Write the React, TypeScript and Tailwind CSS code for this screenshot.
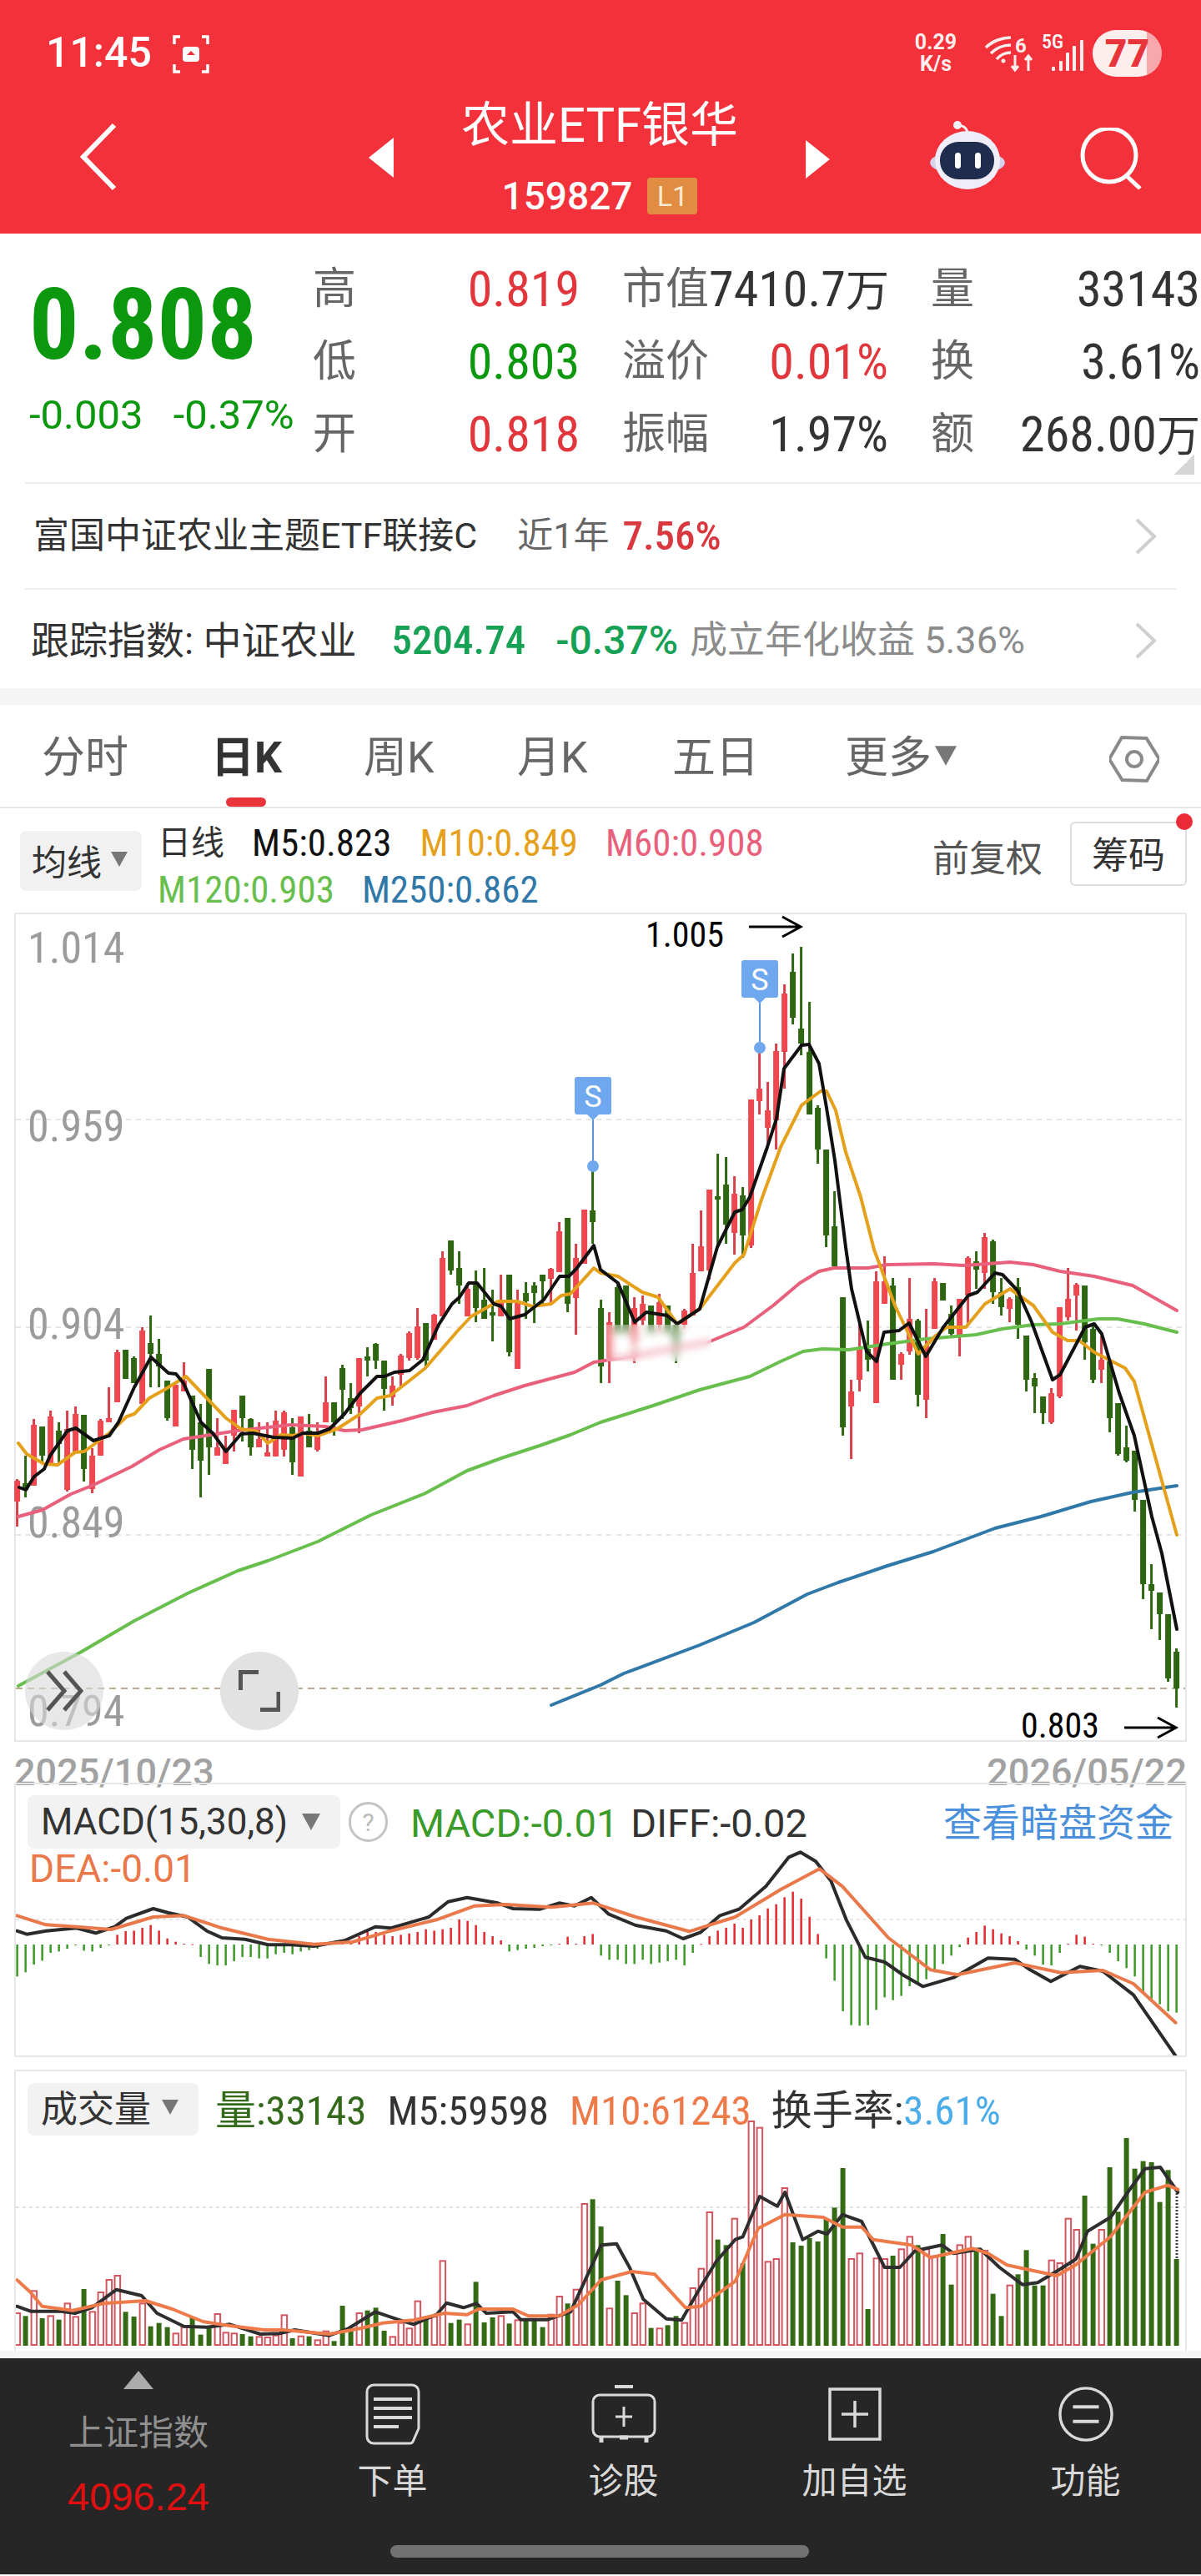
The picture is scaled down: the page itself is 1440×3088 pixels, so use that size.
import React from 'react';

type Pt = [number, number];

// candle: high, low, bodyTop, bodyBottom, red(1)/green(0) -- page y coords
const candles: number[][] = [
  [1775,1832,1777,1802,1],[1747,1797,1780,1788,0],[1703,1783,1710,1783,1],[1712,1757,1712,1747,0],[1693,1757,1700,1757,1],
  [1707,1757,1717,1733,0],[1693,1790,1715,1788,1],[1688,1743,1697,1743,1],[1698,1778,1698,1763,0],[1738,1792,1747,1787,1],
  [1703,1747,1705,1747,1],[1665,1707,1702,1707,1],[1620,1683,1623,1683,1],[1620,1655,1620,1655,0],[1628,1660,1630,1660,0],
  [1593,1685,1597,1685,1],[1579,1665,1612,1625,0],[1607,1665,1625,1640,0],[1657,1705,1657,1702,0],[1662,1712,1662,1712,1],
  [1635,1670,1657,1670,1],[1675,1763,1675,1740,0],[1685,1797,1707,1753,0],[1643,1770,1643,1737,0],[1702,1747,1737,1747,1],
  [1723,1757,1740,1757,1],[1692,1742,1692,1723,1],[1675,1730,1675,1702,0],[1702,1747,1703,1737,0],[1707,1737,1727,1737,1],
  [1707,1748,1743,1748,1],[1693,1748,1705,1748,1],[1693,1748,1695,1740,1],[1702,1770,1713,1755,0],[1700,1772,1700,1772,1],
  [1697,1737,1717,1737,0],[1707,1742,1723,1740,1],[1652,1707,1683,1707,1],[1683,1723,1683,1707,0],[1638,1703,1642,1668,0],
  [1660,1697,1678,1690,0],[1630,1720,1630,1688,1],[1617,1652,1628,1633,0],[1612,1643,1613,1633,0],[1633,1693,1633,1667,0],
  [1652,1687,1663,1677,1],[1625,1665,1627,1650,1],[1598,1633,1600,1630,1],[1570,1632,1592,1630,1],[1588,1640,1588,1633,0],
  [1577,1608,1578,1608,1],[1502,1580,1510,1580,1],[1489,1530,1489,1525,0],[1502,1565,1522,1543,0],[1540,1580,1547,1580,1],
  [1525,1587,1540,1570,0],[1522,1583,1560,1583,0],[1548,1610,1575,1579,0],[1530,1580,1562,1580,1],[1530,1628,1530,1623,0],
  [1548,1643,1563,1643,1],[1539,1583,1552,1562,0],[1539,1588,1543,1552,0],[1530,1568,1530,1538,0],[1522,1565,1523,1535,1],
  [1467,1527,1478,1527,1],[1462,1575,1462,1565,0],[1493,1602,1510,1558,1],[1452,1517,1452,1517,1],[1400,1493,1453,1467,0],
  [1560,1660,1570,1640,0],[1575,1660,1587,1630,1],[1540,1600,1545,1600,0],[1543,1600,1543,1600,0],[1557,1636,1570,1610,1],
  [1555,1591,1565,1585,1],[1567,1600,1567,1600,0],[1553,1600,1563,1590,1],[1567,1600,1567,1600,0],[1587,1636,1590,1610,0],
  [1571,1595,1573,1590,1],[1493,1579,1528,1579,1],[1453,1526,1496,1526,1],[1428,1536,1428,1525,1],[1385,1497,1436,1440,0],
  [1389,1493,1422,1470,0],[1412,1506,1433,1480,1],[1425,1510,1435,1483,0],[1320,1498,1320,1495,1],[1258,1338,1307,1322,1],
  [1299,1375,1333,1354,1],[1253,1380,1262,1345,1],[1182,1307,1193,1263,1],[1145,1230,1167,1222,0],[1137,1267,1235,1253,0],
  [1203,1338,1263,1338,0],[1327,1397,1330,1380,0],[1380,1497,1380,1483,0],[1430,1520,1472,1520,0],[1557,1723,1557,1713,0],
  [1656,1751,1670,1688,1],[1589,1670,1619,1656,1],[1585,1646,1619,1632,0],[1526,1684,1538,1684,1],[1508,1565,1538,1565,1],
  [1534,1656,1543,1656,0],[1623,1656,1625,1638,1],[1534,1626,1583,1622,1],[1583,1688,1585,1674,0],[1571,1702,1615,1680,1],
  [1534,1595,1538,1595,1],[1540,1561,1540,1561,0],[1567,1603,1577,1601,0],[1559,1628,1559,1605,1],[1508,1591,1510,1555,1],
  [1502,1547,1514,1524,0],[1480,1547,1485,1528,1],[1488,1565,1490,1551,0],[1534,1579,1551,1569,0],[1557,1587,1559,1571,1],
  [1534,1607,1545,1590,0],[1603,1670,1603,1656,0],[1648,1696,1654,1664,0],[1676,1709,1676,1696,0],[1666,1709,1672,1707,1],
  [1569,1678,1569,1676,1],[1522,1585,1559,1581,1],[1540,1597,1542,1555,1],[1543,1632,1543,1611,0],[1589,1660,1595,1656,0],
  [1603,1660,1632,1644,1],[1634,1719,1634,1702,0],[1684,1747,1684,1745,0],[1711,1755,1737,1753,0],[1741,1814,1741,1800,0],
  [1800,1919,1800,1901,0],[1877,1955,1901,1909,0],[1911,1968,1911,1937,0],[1937,2018,1937,2014,0],[1978,2049,1982,2026,0],
];

const ma5: Pt[] = [[23,1785],[31,1788],[41,1772],[53,1763],[60,1747],[81,1717],[91,1714],[112,1729],[131,1723],[142,1707],[161,1665],[181,1629],[202,1648],[211,1649],[220,1660],[241,1707],[255,1720],[271,1742],[289,1721],[303,1720],[328,1725],[351,1726],[363,1720],[381,1720],[395,1715],[413,1697],[432,1672],[452,1652],[461,1652],[473,1647],[491,1645],[507,1632],[526,1590],[542,1565],[551,1557],[562,1540],[572,1540],[592,1565],[601,1568],[611,1583],[629,1578],[652,1560],[671,1532],[682,1532],[691,1523],[712,1495],[720,1524],[741,1540],[761,1587],[775,1575],[800,1579],[812,1589],[839,1571],[860,1497],[881,1455],[890,1452],[899,1437],[920,1377],[931,1343],[940,1283],[961,1255],[970,1254],[982,1277],[991,1330],[1001,1393],[1014,1497],[1021,1547],[1039,1622],[1051,1634],[1060,1599],[1078,1597],[1090,1588],[1110,1628],[1131,1593],[1161,1555],[1172,1551],[1193,1528],[1202,1530],[1220,1549],[1237,1587],[1262,1656],[1271,1650],[1301,1593],[1312,1589],[1321,1601],[1342,1672],[1360,1723],[1381,1820],[1393,1864],[1411,1955]];
const ma10: Pt[] = [[22,1732],[32,1745],[53,1757],[69,1758],[90,1743],[101,1742],[131,1720],[152,1700],[161,1697],[179,1678],[197,1668],[223,1652],[243,1673],[271,1702],[289,1715],[308,1718],[321,1732],[337,1722],[351,1723],[363,1720],[381,1723],[404,1715],[432,1697],[452,1678],[468,1675],[491,1657],[510,1642],[549,1597],[565,1580],[597,1562],[620,1562],[638,1568],[661,1565],[673,1555],[684,1553],[712,1522],[720,1528],[741,1532],[770,1551],[789,1557],[812,1589],[839,1571],[881,1516],[892,1506],[913,1440],[936,1377],[961,1327],[984,1310],[991,1310],[1002,1333],[1014,1383],[1032,1437],[1048,1500],[1073,1567],[1101,1625],[1122,1603],[1135,1593],[1158,1593],[1181,1565],[1211,1547],[1239,1567],[1262,1599],[1280,1609],[1294,1609],[1312,1623],[1349,1642],[1360,1658],[1411,1842]];
const ma60: Pt[] = [[22,1820],[51,1812],[85,1793],[110,1783],[158,1760],[191,1740],[220,1727],[253,1722],[285,1717],[321,1713],[349,1710],[390,1712],[413,1717],[434,1716],[482,1705],[519,1695],[560,1687],[592,1675],[629,1663],[689,1647],[712,1635],[757,1628],[849,1611],[892,1593],[927,1567],[959,1540],[982,1526],[1000,1522],[1041,1522],[1064,1518],[1119,1517],[1156,1519],[1211,1515],[1239,1518],[1271,1526],[1312,1532],[1358,1543],[1411,1573]];
const ma120: Pt[] = [[22,2023],[96,1983],[161,1945],[225,1912],[285,1885],[321,1873],[381,1850],[445,1818],[510,1792],[560,1765],[601,1750],[647,1735],[684,1722],[720,1707],[780,1688],[839,1668],[899,1652],[936,1634],[963,1622],[986,1619],[1018,1620],[1064,1613],[1110,1607],[1170,1602],[1202,1595],[1239,1590],[1271,1589],[1317,1583],[1340,1583],[1372,1589],[1411,1599]];
const ma250: Pt[] = [[661,2046],[720,2022],[748,2008],[839,1974],[904,1947],[968,1913],[1005,1899],[1064,1879],[1119,1862],[1156,1848],[1193,1834],[1248,1820],[1308,1802],[1358,1791],[1411,1783]];

const macdBars = [-115,-100,-72,-58,-30,-25,-15,-3,-22,-25,-12,-3,35,48,50,60,70,50,22,10,3,1,-45,-70,-75,-75,-60,-45,-45,-50,-50,-35,-30,-35,-25,-20,-15,2,4,6,10,30,50,45,35,30,35,40,45,55,50,55,60,90,85,70,45,30,15,-25,-20,-15,-12,-6,-3,3,28,3,30,38,-40,-55,-55,-70,-70,-55,-70,-65,-60,-55,-75,-30,2,30,50,60,75,60,90,105,130,145,170,190,165,100,38,-50,-130,-240,-290,-292,-290,-235,-190,-200,-185,-150,-140,-125,-100,-70,-40,-10,25,45,68,55,40,30,12,-18,-40,-72,-75,-30,3,35,28,3,-2,-30,-60,-85,-115,-170,-205,-215,-240,-245];
// raw points read off the 3x crop: x / 1.089, y = 2100 + v / 3
const diff: Pt[] = [[22,650],[35,662],[60,650],[100,640],[125,658],[150,635],[165,605],[200,570],[220,585],[245,600],[270,650],[290,675],[320,680],[350,700],[380,700],[410,705],[450,685],[490,635],[510,640],[560,600],[585,545],[610,530],[650,550],[670,570],[705,572],[730,550],[750,560],[772,530],[795,590],[830,630],[870,650],[892,678],[915,655],[940,595],[965,572],[1000,490],[1030,385],[1045,367],[1065,400],[1085,470],[1105,610],[1130,745],[1155,762],[1180,810],[1205,850],[1245,818],[1290,748],[1325,752],[1345,790],[1372,832],[1410,778],[1440,795],[1480,880],[1510,1000],[1535,1100]];
const dea: Pt[] = [[22,595],[60,628],[100,635],[145,645],[200,600],[240,595],[290,640],[350,680],[410,698],[460,690],[510,650],[570,610],[620,560],[660,555],[720,565],[775,550],[830,600],[900,652],[960,600],[1020,500],[1070,427],[1100,490],[1160,675],[1215,790],[1250,808],[1325,765],[1385,800],[1440,792],[1480,840],[1535,980]];

const volTops = [885,895,805,903,895,908,850,898,798,880,810,765,750,880,897,850,932,920,935,958,935,898,962,938,888,955,958,960,968,970,972,965,892,975,968,968,982,950,985,858,940,885,875,865,948,970,920,940,842,900,898,697,920,908,925,772,918,900,895,922,910,905,905,935,890,825,850,800,492,475,573,868,768,820,885,850,938,940,928,895,920,795,725,522,620,640,545,705,195,218,700,690,435,630,642,615,627,545,505,363,690,670,870,688,690,678,655,610,640,655,680,600,782,640,610,650,660,815,895,785,745,658,785,785,695,705,545,585,462,635,585,360,520,255,365,338,342,485,370,690];
const volM5: Pt[] = [[22,860],[40,878],[80,878],[98,885],[120,865],[152,800],[185,822],[205,885],[240,932],[270,935],[300,925],[340,960],[365,958],[385,945],[430,965],[455,940],[490,880],[520,908],[540,925],[570,890],[583,848],[605,865],[622,850],[635,885],[670,880],[680,908],[715,908],[745,880],[770,730],[785,640],[805,635],[822,720],[840,835],[870,905],[890,910],[915,790],[935,700],[960,620],[970,610],[992,465],[1015,500],[1025,450],[1048,620],[1068,590],[1080,600],[1100,530],[1125,555],[1155,720],[1175,720],[1195,660],[1230,640],[1245,670],[1280,655],[1305,720],[1335,782],[1355,775],[1385,725],[1405,690],[1420,590],[1450,540],[1475,440],[1495,365],[1515,360],[1538,450]];
const volM10: Pt[] = [[22,765],[40,810],[55,860],[95,875],[135,850],[190,840],[225,870],[265,915],[300,930],[345,945],[370,945],[430,960],[470,940],[500,920],[540,910],[580,885],[610,890],[625,870],[670,870],[690,895],[730,895],[755,855],[785,765],[825,735],[855,745],[895,865],[915,860],[960,770],[990,580],[1025,530],[1075,540],[1100,575],[1125,575],[1140,620],[1190,640],[1215,685],[1270,652],[1290,670],[1315,712],[1380,750],[1405,710],[1450,610],[1495,450],[1525,425],[1538,440]];

const toPath = (pts: Pt[]) => pts.map((p, i) => `${i ? 'L' : 'M'}${p[0]} ${p[1]}`).join(' ');
const cropToPage = (pts: Pt[], top: number): Pt[] => pts.map(([x, y]) => [+(x / 1.089).toFixed(1), +(top + y / 3).toFixed(1)]);
const candleX = (i: number) => 20.6 + i * 10;

// condensed digits, like the app's own number font
const NUM = "font-['Roboto','Noto_Sans_CJK_SC',sans-serif] [font-stretch:75%]";

const Line = ({ pts, color, w = 4 }: { pts: Pt[]; color: string; w?: number }) => (
  <path d={toPath(pts)} fill="none" stroke={color} strokeWidth={w} strokeLinejoin="round" strokeLinecap="round" />
);

const Arrow = ({ x, y }: { x: number; y: number }) => (
  <path d={`M${x} ${y}H${x + 62}M${x + 40} ${y - 12}L${x + 62} ${y}L${x + 40} ${y + 12}`} fill="none" stroke="#000" strokeWidth="3" />
);

const SMark = ({ x, top, dot }: { x: number; top: number; dot: number }) => (
  <g>
    <line x1={x} x2={x} y1={top + 50} y2={dot} stroke="#5b95dc" strokeWidth="2" />
    <circle cx={x} cy={dot} r="7" fill="#6fa8ee" />
    <path d={`M${x - 22} ${top + 3}a3 3 0 0 1 3 -3h38a3 3 0 0 1 3 3v39a3 3 0 0 1 -3 3h-12l-7 7l-7 -7h-12a3 3 0 0 1 -3 -3z`} fill="#6fa8ee" />
    <text x={x} y={top + 36} textAnchor="middle" fontSize="36" fill="#fff" className="font-['Roboto']">S</text>
  </g>
);

const Caret = ({ className }: { className: string }) => (
  <svg viewBox="0 0 24 22" className={className}><path d="M1 1h22L12 21z" fill="#777" /></svg>
);

const StatCell = ({ label, value, tone }: { label: string; value: React.ReactNode; tone: string }) => (
  <div className="flex justify-between items-center">
    <span className="text-[52px] text-[#666] leading-none whitespace-nowrap">{label}</span>
    <span className={`text-[60px] leading-none whitespace-nowrap ${NUM} ${tone}`}>{value}</span>
  </div>
);

const Chevron = () => (
  <svg viewBox="0 0 28 46" className="w-[28px] h-[46px]"><path d="M3 3l21 20L3 43" fill="none" stroke="#cfcfcf" strokeWidth="4" /></svg>
);

const RED = 'text-[#e0363c]';
const GREEN = 'text-[#0b980f]';
const DARK = 'text-[#333]';

const CandleChart = () => (
  <div className="relative ml-[17px] w-[1406px] h-[994px] border-2 border-[#e8e8e8]">
    <svg viewBox="19 1098 1402 990" className="block w-full h-full overflow-visible">
      {[1344, 1593, 1842].map((y) => (
        <line key={y} x1="19" x2="1421" y1={y} y2={y} stroke="#dedede" strokeWidth="1.5" strokeDasharray="6 6" />
      ))}
      <line x1="19" x2="1421" y1="2026" y2="2026" stroke="#bcae8f" strokeWidth="2" strokeDasharray="8 6" />
      <g fontSize="52" fill="#9b9b9b" className={NUM}>
        <text x="33" y="1156">1.014</text>
        <text x="33" y="1370">0.959</text>
        <text x="33" y="1607">0.904</text>
        <text x="33" y="1845">0.849</text>
        <text x="33" y="2071">0.794</text>
      </g>
      {candles.map(([hi, lo, top, bottom, red], i) => {
        const x = candleX(i);
        return (
          <g key={i}>
            <rect x={x - 1.5} y={hi} width="3" height={lo - hi} fill={red ? '#d5404a' : '#2f6612'} />
            <rect x={x - 3.5} y={top} width="7" height={Math.max(bottom - top, 2)} fill={red ? '#ee474f' : '#2f6612'} />
          </g>
        );
      })}
      <Line pts={ma250} color="#2f78a8" />
      <Line pts={ma120} color="#68bf4e" />
      <Line pts={ma60} color="#e8607c" />
      <Line pts={ma10} color="#e5a11c" />
      <Line pts={ma5} color="#111" />
      <SMark x={711} top={1293} dot={1400} />
      <SMark x={911} top={1153} dot={1258} />
      <g fontSize="42" fill="#000" className={NUM}>
        <text x="774" y="1137">1.005</text>
        <text x="1224" y="2085">0.803</text>
      </g>
      <Arrow x={898} y={1113} />
      <Arrow x={1348} y={2073} />
    </svg>
    {/* blurred smudge in the source screenshot */}
    <div className="absolute left-[708px] top-[492px] w-[126px] h-[44px] backdrop-blur-[5px] bg-white/30" />
    <button className="absolute left-[11px] top-[884px] w-[94px] h-[94px] rounded-full bg-[#d8d8d8]/60 flex items-center justify-center">
      <svg viewBox="0 0 46 52" className="w-[46px] h-[52px]"><path d="M3 3l20 23L3 49M23 3l20 23l-20 23" fill="none" stroke="#555" strokeWidth="5" /></svg>
    </button>
    <button className="absolute left-[245px] top-[884px] w-[94px] h-[94px] rounded-full bg-[#e2e2e2] flex items-center justify-center">
      <svg viewBox="0 0 50 50" className="w-[50px] h-[50px]"><path d="M24 2.500H2.500V24M48 26V47.500H26" fill="none" stroke="#555" strokeWidth="5" /></svg>
    </button>
  </div>
);

const MacdPanel = () => (
  <div className="relative ml-[17px] w-[1406px] h-[329px] border-2 border-[#e8e8e8]">
    <svg viewBox="19 2141 1402 325" className="absolute inset-0 w-full h-full">
      <line x1="19" x2="1421" y1="2303" y2="2303" stroke="#dedede" strokeWidth="1.5" strokeDasharray="4 4" />
      {macdBars.map((v, i) => (
        <rect key={i} x={candleX(i) - 1.2} y={v > 0 ? 2333 - v / 3 : 2333} width="2.5" height={Math.max(Math.abs(v) / 3, 1)} fill={v > 0 ? '#e02a30' : '#3d9a26'} />
      ))}
      <Line pts={cropToPage(diff, 2100)} color="#2b2b2b" />
      <Line pts={cropToPage(dea, 2100)} color="#e9794a" w={4} />
    </svg>
    <div className="relative flex pl-[14px] pt-[13px]">
      <div className="w-[375px] h-[64px] bg-[#f2f2f2] rounded-lg flex items-center pl-[16px] text-[44px] text-[#333]">
        MACD(15,30,8)
        <Caret className="w-[24px] h-[22px] ml-[16px]" />
      </div>
      <div className="ml-[10px] mt-[8px] w-[47px] h-[48px] rounded-full border-[3px] border-[#c4c4c4] flex items-center justify-center text-[30px] text-[#bbb]">?</div>
      <span className="ml-[27px] mt-[7px] text-[47px] leading-[54px] text-[#3a9a2a]">MACD:-0.01</span>
      <span className="ml-[15px] mt-[7px] text-[47px] leading-[54px] text-[#333]">DIFF:-0.02</span>
      <span className="ml-auto mr-[14px] mt-[6px] text-[46px] leading-[54px] text-[#4a90dc]">查看暗盘资金</span>
    </div>
    <div className="relative pl-[16px] mt-[2px] text-[46px] leading-[44px] text-[#e9794a]">DEA:-0.01</div>
  </div>
);

const VolumePanel = () => (
  <div className="relative ml-[17px] mt-[15px] w-[1406px] h-[337px] border-2 border-b-0 border-[#e8e8e8]">
    <svg viewBox="19 2485 1402 335" className="absolute inset-0 w-full h-full">
      <line x1="19" x2="1421" y1="2648" y2="2648" stroke="#d8d8d8" strokeWidth="1.5" strokeDasharray="4 4" />
      {volTops.map((t, i) => {
        const y = 2480 + t / 3;
        return candles[i][4] ? (
          <rect key={i} x={candleX(i) - 3} y={y} width="6.500" height={2813 - y} fill="#fff" stroke="#d4545f" strokeWidth="2" />
        ) : (
          <rect key={i} x={candleX(i) - 3} y={y} width="6" height={2814 - y} fill="#356a14" />
        );
      })}
      <line x1="1411" x2="1411" y1="2627" y2="2710" stroke="#444" strokeWidth="3" strokeDasharray="2 2" />
      <Line pts={cropToPage(volM5, 2480)} color="#2e2e2e" />
      <Line pts={cropToPage(volM10, 2480)} color="#ee7a4a" w={4} />
    </svg>
    <div className="relative flex items-start pl-[14px] pt-[14px]">
      <div className="w-[205px] h-[63px] bg-[#f2f2f2] rounded-lg flex items-center pl-[16px] text-[44px] text-[#333]">
        成交量
        <Caret className="w-[22px] h-[20px] ml-[12px] -mt-[6px]" />
      </div>
      <div className={`flex items-center h-[56px] mt-[6px] ml-[20px] text-[49px] ${NUM}`}>
        <span className="text-[#33691a]">量:33143</span>
        <span className="ml-[25px] text-[#333]">M5:59598</span>
        <span className="ml-[25px] text-[#ee7a4a]">M10:61243</span>
        <span className="ml-[24px] text-[#333]">换手率:</span>
        <span className="text-[#4aace8]">3.61%</span>
      </div>
    </div>
  </div>
);

const FootItem = ({ label, icon }: { label: string; icon: React.ReactNode }) => (
  <div className="flex flex-col items-center pt-[29px]">
    <div className="h-[76px] flex items-center">{icon}</div>
    <span className="mt-[18px] text-[42px] leading-[50px] text-[#d8d8d8]">{label}</span>
  </div>
);

export default function App() {
  return (
    <div className="w-[1440px] h-[3088px] overflow-hidden bg-white font-['Roboto','Noto_Sans_CJK_SC',sans-serif]">
      {/* red header */}
      <header className="h-[280px] bg-[#f2313a] text-white">
        <div className="h-[112px] flex items-start">
          <span className="ml-[55px] mt-[34px] text-[50px] leading-[58px] font-medium">11:45</span>
          <svg viewBox="0 0 46 46" className="ml-[24px] mt-[42px] w-[46px] h-[46px]">
            <path d="M10 2H3v9M36 2h7v9M10 44H3v-9M36 44h7v-9" fill="none" stroke="#fff" strokeWidth="3.5" />
            <rect x="13" y="14" width="20" height="18" rx="4" fill="#fff" />
            <path d="M18 24l5-5l5 5z" fill="#f2313a" />
          </svg>
          <div className="ml-auto mt-[38px] flex flex-col items-center text-[25px] leading-[26px] font-bold w-[56px] text-[#fdeeee]">
            <span>0.29</span>
            <span>K/s</span>
          </div>
          <svg viewBox="0 0 62 46" className="ml-[30px] mt-[42px] w-[62px] h-[46px]">
            <path d="M2 15C10 7 22 3 32 3M8 22C15 15 23 12 32 12M15 29C19 24 26 21 32 21" fill="none" stroke="#fdeeee" strokeWidth="3.500" />
            <circle cx="23" cy="31" r="2.500" fill="#fdeeee" />
            <path d="M37 24v17M33 37l4 5l4-5M53 43V26M49 30l4-5l4 5" fill="none" stroke="#fdeeee" strokeWidth="3" />
            <text x="37" y="21" fontSize="24" fontWeight="700" fill="#fdeeee" className="font-['Roboto']">6</text>
          </svg>
          <div className="ml-[7px] mt-[38px] relative w-[52px] h-[50px]">
            <span className="block text-[24px] leading-[24px] font-medium [font-stretch:75%]">5G</span>
            <svg viewBox="0 0 52 50" className="absolute inset-0 w-[52px] h-[50px]">
              <rect x="12" y="42" width="4" height="5" rx="1" fill="#fdeeee" />
              <rect x="21" y="35" width="4" height="12" rx="1" fill="#fdeeee" />
              <rect x="29" y="25" width="4" height="22" rx="1" fill="#fdeeee" />
              <rect x="37" y="17" width="4" height="30" rx="1" fill="#fdeeee" />
              <rect x="46" y="10" width="4" height="37" rx="1" fill="#fdeeee" />
            </svg>
          </div>
          <div className="ml-[9px] mt-[36px] mr-[47px] w-[83px] h-[56px] rounded-full bg-[linear-gradient(90deg,#fdeeee_78%,#f8a8ac_78%)] flex items-center justify-center text-[46px] font-black text-[#e8353c]">77</div>
        </div>
        <div className="h-[168px] flex items-start">
          <svg viewBox="0 0 45 82" className="ml-[95px] mt-[35px] w-[45px] h-[82px]">
            <path d="M42 3L5 41l37 38" fill="none" stroke="#fff" strokeWidth="6" />
          </svg>
          <svg viewBox="0 0 30 48" className="ml-[302px] mt-[53px] w-[30px] h-[48px]"><path d="M30 0v48L0 24z" fill="#fff" /></svg>
          <div className="w-[494px] flex flex-col items-center">
            <span className="mt-[5px] text-[58px] leading-[66px]">农业ETF银华</span>
            <div className="mt-[30px] flex items-center">
              <span className="text-[46px] leading-[44px] font-medium">159827</span>
              <span className="ml-[18px] w-[60px] h-[44px] rounded bg-[#e08c42] flex items-center justify-center text-[34px] text-[#fde9d0]">L1</span>
            </div>
          </div>
          <svg viewBox="0 0 30 48" className="mt-[56px] w-[29px] h-[46px]"><path d="M0 0v48l30-24z" fill="#fff" /></svg>
          <svg viewBox="0 0 90 84" className="ml-[120px] mt-[33px] w-[90px] h-[84px]">
            <path d="M33 5c6 0 11 3 12 9" fill="none" stroke="#f3f1fa" strokeWidth="3" />
            <circle cx="33" cy="5" r="5" fill="#f3f1fa" />
            <ellipse cx="45" cy="50" rx="45" ry="15" fill="#d4d2ec" />
            <ellipse cx="45" cy="47" rx="39" ry="35" fill="#eeedf8" />
            <rect x="12" y="25" width="65" height="45" rx="22" fill="#1f2c4d" />
            <rect x="30" y="38" width="7" height="19" rx="3.500" fill="#fff" />
            <rect x="54" y="38" width="7" height="19" rx="3.500" fill="#fff" />
          </svg>
          <svg viewBox="0 0 75 74" className="ml-[90px] mt-[41px] w-[75px] h-[74px]">
            <circle cx="35" cy="33" r="32" fill="none" stroke="#fff" strokeWidth="5" />
            <path d="M57 59l15 14" stroke="#fff" strokeWidth="5" />
          </svg>
        </div>
      </header>

      {/* quote stats */}
      <section className="relative h-[300px] flex border-b-2 border-[#ececec] ml-[30px]">
        <div className="w-[345px] shrink-0 pt-[49px] pl-[5px]">
          <div className={`text-[118px] leading-[122px] font-bold text-[#0b980f] ${NUM}`}>0.808</div>
          <div className="mt-[22px] flex text-[49px] leading-[50px] text-[#0b980f]">
            <span>-0.003</span>
            <span className="ml-[36px]">-0.37%</span>
          </div>
        </div>
        <div className="pt-[23px] grid grid-cols-[320px_319px_323px] gap-x-[51px] auto-rows-[87px]">
          <StatCell label="高" value="0.819" tone={RED} />
          <StatCell label="市值" value={<>7410.7<span className="text-[52px]">万</span></>} tone={DARK} />
          <StatCell label="量" value="33143" tone={DARK} />
          <StatCell label="低" value="0.803" tone={GREEN} />
          <StatCell label="溢价" value="0.01%" tone={RED} />
          <StatCell label="换" value="3.61%" tone={DARK} />
          <StatCell label="开" value="0.818" tone={RED} />
          <StatCell label="振幅" value="1.97%" tone={DARK} />
          <StatCell label="额" value={<>268.00<span className="text-[52px]">万</span></>} tone={DARK} />
        </div>
        <div className="absolute right-[8px] bottom-[9px] w-[24px] h-[24px] bg-[linear-gradient(135deg,transparent_50%,#d6d6d6_50%)]" />
      </section>

      {/* fund rows */}
      <section className="h-[245px] mx-[30px] text-[#333]">
        <div className="h-[127px] flex items-center pl-[10px] pr-[22px] border-b-2 border-[#efefef]">
          <span className="text-[43px]">富国中证农业主题ETF联接C</span>
          <span className="ml-[48px] text-[43px] text-[#666]">近1年</span>
          <span className={`ml-[16px] text-[49px] font-medium text-[#d8383e] ${NUM}`}>7.56%</span>
          <span className="ml-auto"><Chevron /></span>
        </div>
        <div className="h-[118px] pt-[4px] flex items-center pl-[7px] pr-[22px]">
          <span className="text-[46px]">跟踪指数: 中证农业</span>
          <span className={`ml-[42px] text-[49px] font-medium text-[#16a155] ${NUM}`}>5204.74</span>
          <span className="ml-[36px] text-[48px] font-medium text-[#16a155]">-0.37%</span>
          <span className="ml-[14px] text-[45px] text-[#8c8c8c]">成立年化收益 5.36%</span>
          <span className="ml-auto"><Chevron /></span>
        </div>
      </section>

      {/* period tabs */}
      <div className="h-[20px] bg-[#f5f5f5]" />
      <nav className="relative h-[124px] grid grid-cols-[203px_183px_184px_186px_207px_auto] items-center pl-[50px] border-b-2 border-[#e6e6e6] text-[52px] text-[#666]">
        <span className="mt-[6px]">分时</span>
        <span className="relative self-stretch flex items-center font-bold text-[#333] pt-[6px]">
          日K
          <span className="absolute left-[18px] bottom-0 w-[48px] h-[11px] rounded-full bg-[#e8343a]" />
        </span>
        <span className="mt-[6px]">周K</span>
        <span className="mt-[6px]">月K</span>
        <span className="mt-[6px]">五日</span>
        <span className="flex items-center mt-[6px]">更多<Caret className="w-[30px] h-[26px] ml-[2px] -mt-[6px]" /></span>
        <svg viewBox="0 0 60 64" className="absolute right-[50px] top-[33px] w-[60px] h-[64px]">
          <path d="M30 3l26 14v30L30 61L4 47V17z" fill="none" stroke="#8a8a8a" strokeWidth="4" transform="rotate(30 30 32)" />
          <circle cx="30" cy="32" r="9" fill="none" stroke="#8a8a8a" strokeWidth="4" />
        </svg>
      </nav>

      {/* moving average legend */}
      <div className={`relative h-[125px] flex items-start text-[45px] ${NUM}`}>
        <div className="ml-[24px] mt-[27px] w-[146px] h-[72px] bg-[#f1f1f1] rounded-lg flex items-center pl-[14px] pt-[4px] text-[42px] text-[#333]">
          均线
          <Caret className="w-[22px] h-[20px] ml-[10px] -mt-[8px]" />
        </div>
        <div className="ml-[19px] mt-[14px] leading-[56px]">
          <div className="flex">
            <span className="w-[113px] text-[40px] text-[#333]">日线</span>
            <span className="text-[#111]">M5:0.823</span>
            <span className="ml-[34px] text-[#e5a11c]">M10:0.849</span>
            <span className="ml-[33px] text-[#e8607c]">M60:0.908</span>
          </div>
          <div className="flex">
            <span className="text-[#68bf4e]">M120:0.903</span>
            <span className="ml-[33px] text-[#2f78a8]">M250:0.862</span>
          </div>
        </div>
        <span className="ml-auto mt-[33px] text-[44px] text-[#555] leading-[56px]">前复权</span>
        <div className="ml-[33px] mr-[17px] mt-[16px] pt-[4px] w-[140px] h-[77px] border-2 border-[#ddd] rounded-md flex items-center justify-center text-[44px] text-[#333]">筹码</div>
        <span className="absolute right-[10px] top-[6px] w-[20px] h-[20px] rounded-full bg-[#ea2a36]" />
      </div>

      <CandleChart />

      <div className="h-[49px] pt-[19px] px-[17px] flex items-start justify-between text-[45px] leading-[36px] text-[#a2a2a2] font-medium">
        <span>2025/10/23</span>
        <span>2026/05/22</span>
      </div>

      <MacdPanel />
      <VolumePanel />
      <div className="h-[9px] bg-[#f5f5f5]" />

      {/* bottom toolbar */}
      <footer className="relative h-[259px] bg-[#262626] grid grid-cols-[332px_repeat(4,277px)]">
        <div className="flex flex-col items-center pt-[15px]">
          <svg viewBox="0 0 36 22" className="w-[36px] h-[22px]"><path d="M18 0l18 22H0z" fill="#ababab" /></svg>
          <span className="mt-[28px] text-[42px] leading-[50px] text-[#8f8f8f]">上证指数</span>
          <span className="mt-[26px] text-[47px] leading-[50px] text-[#e01010] font-['Liberation_Sans',sans-serif]">4096.24</span>
        </div>
        <FootItem label="下单" icon={
          <svg viewBox="0 0 66 74" className="w-[66px] h-[74px]" fill="none" stroke="#d9d9d9" strokeWidth="3">
            <path d="M10 2h46a8 8 0 0 1 8 8v44l-7 16a4 4 0 0 1-3 2H10a8 8 0 0 1-8-8V10a8 8 0 0 1 8-8z" />
            <path d="M10 19h46M10 30h46M10 41h46M10 52h30" strokeWidth="4" />
          </svg>} />
        <FootItem label="诊股" icon={
          <svg viewBox="0 0 78 70" className="w-[78px] h-[70px]" fill="none" stroke="#d9d9d9" strokeWidth="3">
            <path d="M28 2h22" strokeWidth="4" />
            <rect x="2" y="12" width="74" height="50" rx="8" />
            <path d="M39 26v24M29 38h20" />
            <path d="M12 63v6M66 63v6M34 63h10" strokeWidth="5" />
          </svg>} />
        <FootItem label="加自选" icon={
          <svg viewBox="0 0 64 64" className="w-[64px] h-[64px]" fill="none" stroke="#d9d9d9" strokeWidth="3.500">
            <rect x="2" y="2" width="60" height="60" />
            <path d="M32 16v32M16 32h32" />
          </svg>} />
        <FootItem label="功能" icon={
          <svg viewBox="0 0 70 70" className="w-[68px] h-[70px]" fill="none" stroke="#d9d9d9" strokeWidth="3.500">
            <circle cx="35" cy="35" r="32" />
            <path d="M19 26h32M19 44h32" strokeWidth="4" />
          </svg>} />
        <div className="absolute left-[468px] top-[224px] w-[502px] h-[15px] rounded-full bg-[#727272]" />
      </footer>
    </div>
  );
}
